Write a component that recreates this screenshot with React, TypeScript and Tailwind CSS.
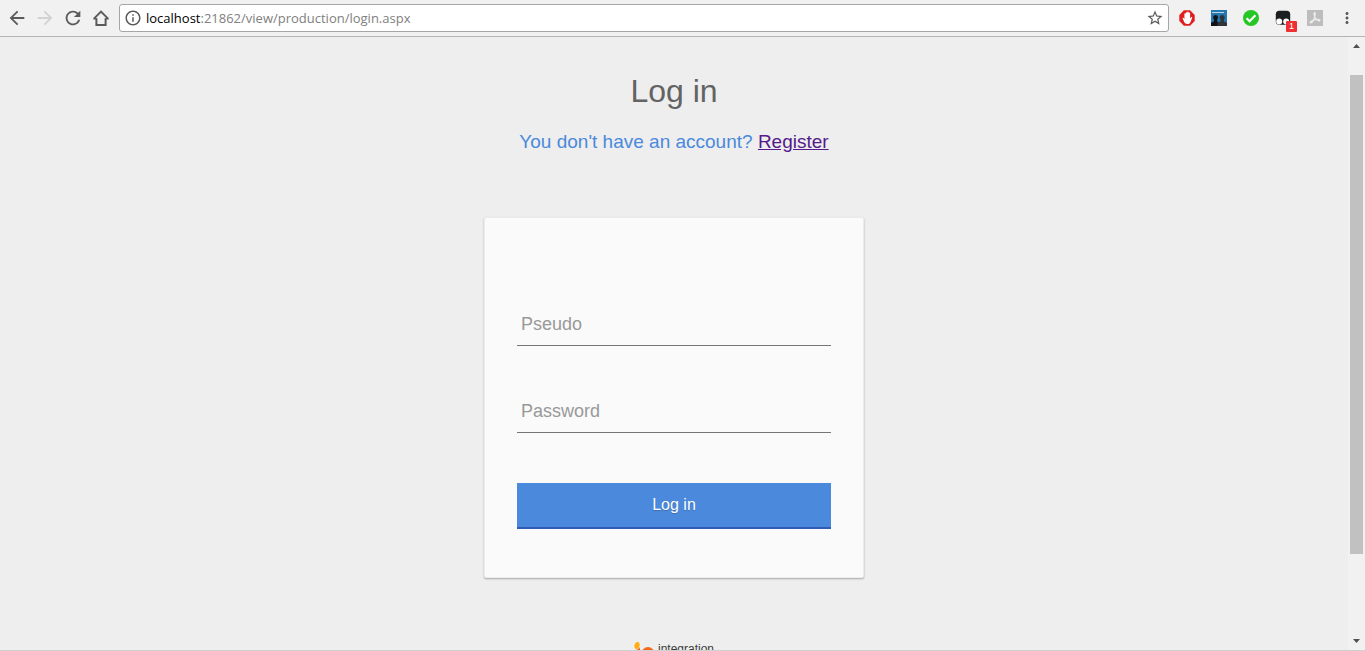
import React, { useState } from "react";
import {
  MdArrowBack,
  MdArrowForward,
  MdInfoOutline,
  MdMoreVert,
  MdRefresh,
  MdStarBorder,
} from "react-icons/md";

type IconButtonProps = {
  label: string;
  disabled?: boolean;
  children: React.ReactNode;
};

function NavButton({ label, disabled, children }: IconButtonProps) {
  return (
    <button
      type="button"
      aria-label={label}
      disabled={disabled}
      className="flex size-5 shrink-0 items-center justify-center text-[#5a5a5a] disabled:text-[#d2d2d2]"
    >
      {children}
    </button>
  );
}

function ExtensionButton({ label, children }: IconButtonProps) {
  return (
    <button
      type="button"
      aria-label={label}
      className="relative flex size-4 shrink-0 items-center justify-center"
    >
      {children}
    </button>
  );
}

function HomeIcon() {
  return (
    <svg viewBox="0 0 16 16" className="size-4" fill="none" stroke="currentColor" strokeWidth="2">
      <path d="M1 8.6 8 1.6l7 7M3.4 8.2V15h9.2V8.2" strokeLinejoin="miter" />
      <path d="M.4 8.7h3.2M12.4 8.7h3.2" strokeWidth="1.4" />
    </svg>
  );
}

function BlockerIcon() {
  return (
    <svg viewBox="0 0 16 16" className="size-4">
      <path d="M4.900.3h6.200L15.700 4.900v6.200L11.100 15.700H4.900L.3 11.100V4.900z" fill="#e01f1f" />
      <path
        d="M4.800 11 3.700 8.800c-.4-.9.6-1.300 1.100-.6l.6.8V4c0-.9 1.200-.9 1.300 0V2.900c0-1 1.400-1 1.500 0v-.6c0-1 1.400-1 1.500 0V3c.1-.9 1.400-.8 1.400.2V8.600l.8-1.200c.6-.8 1.500-.3 1.200.6l-1.700 4.200c-.6 1.200-1.500 1.900-3 1.900-1.900 0-3-1.300-3.600-3.100z"
        fill="#fff"
      />
    </svg>
  );
}

function PeopleIcon() {
  return (
    <svg viewBox="0 0 16 16" className="size-4">
      <path d="M0 0h16v16H0z" fill="#2577ae" />
      <path d="M1 2.500h12" stroke="#b8d8ec" strokeWidth="1" />
      <path d="M0 16v-3.200L3 11.400V9.600C1.600 8 2 5 4.600 5s3 3 1.600 4.600v1.800l2.300 1.400V16z" fill="#101418" />
      <path d="M6.500 16v-3.200l3-1.400V9.600C8.200 8 8.500 5 11.200 5s3 3 1.700 4.600v1.800l3.100 1.400V16z" fill="#303438" />
    </svg>
  );
}

function CheckIcon() {
  return (
    <svg viewBox="0 0 16 16" className="size-4">
      <circle cx="8" cy="8" r="8" fill="#25c625" />
      <path d="m3.600 8.200 3 3 5.800-6" fill="none" stroke="#fff" strokeWidth="2.200" />
    </svg>
  );
}

function MonkeyIcon() {
  return (
    <svg viewBox="0 0 16 16" className="size-4">
      <rect x=".8" y=".8" width="14.400" height="14" rx="3.500" fill="#1c1f21" />
      <circle cx="4.200" cy="11.400" r="3" fill="#fff" />
      <circle cx="11.200" cy="11.400" r="3" fill="#fff" />
    </svg>
  );
}

function PdfIcon() {
  return (
    <svg viewBox="0 0 16 16" className="size-4">
      <path d="M0 0h16v16H0z" fill="#bdbdbd" />
      <path
        d="M7.500 2.500c1.400 0 .6 3.500-.3 5.700-.9 2.300-2.500 5-3.700 4.800-1.300-.3 1-2.500 4-3.200 2.600-.6 5.500-.6 5.500.5 0 1.200-2.800.2-4.300-1.700C7.300 6.700 6.500 2.500 7.500 2.500z"
        fill="none"
        stroke="#ededed"
        strokeWidth="1.200"
      />
    </svg>
  );
}

function BrowserBar() {
  return (
    <header className="flex h-[37px] shrink-0 items-center border-b border-[#b4b4b4] bg-[#f1f1f1] pr-[10px] pl-[7px]">
      <nav aria-label="Browser" className="flex items-center gap-2">
        <NavButton label="Back">
          <MdArrowBack className="size-[22px] shrink-0" />
        </NavButton>
        <NavButton label="Forward" disabled>
          <MdArrowForward className="size-[22px] shrink-0" />
        </NavButton>
        <NavButton label="Reload">
          <MdRefresh className="size-[22px] shrink-0" />
        </NavButton>
        <NavButton label="Home">
          <HomeIcon />
        </NavButton>
      </nav>

      <div className="ml-2 flex h-7 min-w-0 flex-1 items-center rounded-[3px] border border-[#a6a6a6] bg-white px-1">
        <MdInfoOutline className="size-[18px] shrink-0 text-[#5a5a5a]" />
        <a
          href="#login"
          className="ml-1 min-w-0 flex-1 truncate font-['Open_Sans','Noto_Sans',sans-serif] text-[13px] leading-5 text-[#808080]"
        >
          <span className="text-black">localhost</span>:21862/view/production/login.aspx
        </a>
        <button type="button" aria-label="Bookmark this page" className="text-[#5a5a5a]">
          <MdStarBorder className="size-[18px]" />
        </button>
      </div>

      <div className="ml-[10px] flex items-center gap-4">
        <ExtensionButton label="Ad blocker">
          <BlockerIcon />
        </ExtensionButton>
        <ExtensionButton label="People">
          <PeopleIcon />
        </ExtensionButton>
        <ExtensionButton label="Site status">
          <CheckIcon />
        </ExtensionButton>
        <ExtensionButton label="User scripts">
          <MonkeyIcon />
          <span className="absolute top-[11px] left-[11px] flex h-[11px] w-[11px] items-center justify-center rounded-[1px] bg-[#ee3035] font-['Liberation_Sans',sans-serif] text-[9px] leading-none text-white">
            1
          </span>
        </ExtensionButton>
        <ExtensionButton label="PDF">
          <PdfIcon />
        </ExtensionButton>
        <ExtensionButton label="Menu">
          <MdMoreVert className="size-[18px] shrink-0 text-[#5a5a5a]" />
        </ExtensionButton>
      </div>
    </header>
  );
}

type FieldProps = {
  id: string;
  label: string;
  type: string;
  value: string;
  onChange: (value: string) => void;
};

function Field({ id, label, type, value, onChange }: FieldProps) {
  return (
    <div className="relative">
      <input
        id={id}
        type={type}
        placeholder=" "
        value={value}
        onChange={(event) => onChange(event.target.value)}
        className="peer block h-11 w-full border-b border-[#757575] bg-transparent px-1 text-lg leading-6 text-[#333] outline-none"
      />
      <label
        htmlFor={id}
        className="pointer-events-none absolute top-[10px] left-1 text-lg leading-6 text-[#999] peer-[:not(:placeholder-shown)]:hidden"
      >
        {label}
      </label>
    </div>
  );
}

function LoginForm() {
  const [pseudo, setPseudo] = useState("");
  const [password, setPassword] = useState("");

  return (
    <form
      onSubmit={(event) => event.preventDefault()}
      className="mt-[63px] w-full max-w-[380px] rounded-[2px] border border-[#ececec] bg-[#fafafa] px-8 pt-[84px] pb-12 shadow-[0_1px_2px_rgba(0,0,0,0.3)]"
    >
      <div className="flex flex-col gap-[43px]">
        <Field id="pseudo" label="Pseudo" type="text" value={pseudo} onChange={setPseudo} />
        <Field id="password" label="Password" type="password" value={password} onChange={setPassword} />
      </div>
      <button
        type="submit"
        className="mt-[50px] block h-[46px] w-full border-b-2 border-[#2f5bb7] bg-[#4b89dc] text-base leading-6 text-white [text-shadow:0_1px_1px_rgba(0,0,0,0.2)]"
      >
        Log in
      </button>
    </form>
  );
}

function FooterLogo() {
  return (
    <footer className="mt-16 flex w-full justify-center">
      <div className="flex h-8 w-[84px] items-start gap-1">
        <svg viewBox="0 0 22 30" className="h-[30px] w-[22px] shrink-0">
          <ellipse cx="5" cy="3.500" rx="2.500" ry="3.500" fill="#ffae0d" transform="rotate(15 5 3.500)" />
          <path d="M3 8c2 0 4-1 4.500-3l.5 2v20H2z" fill="#ee6a16" />
          <circle cx="16" cy="11.500" r="5" fill="none" stroke="#f26a1b" strokeWidth="3" />
        </svg>
        <span className="font-['Liberation_Sans',sans-serif] text-xs leading-[14px] text-[#3c3c3c]">
          integration
        </span>
      </div>
    </footer>
  );
}

function ScrollBar() {
  return (
    <div aria-hidden="true" className="flex w-[17px] shrink-0 flex-col items-center bg-[#f1f1f1] py-[7px]">
      <svg viewBox="0 0 7 4" className="h-1 w-[7px] shrink-0" fill="#505050">
        <path d="M0 4 3.500 0 7 4z" />
      </svg>
      <div className="flex w-[13px] flex-1 flex-col pt-[27px] pb-[85px]">
        <div className="flex-1 bg-[#c1c1c1]" />
      </div>
      <svg viewBox="0 0 7 4" className="h-1 w-[7px] shrink-0" fill="#505050">
        <path d="M0 0h7L3.500 4z" />
      </svg>
    </div>
  );
}

export default function App() {
  return (
    <div className="flex h-screen flex-col border-b border-[#cfcfcf] bg-[#eee] font-['Liberation_Sans',Arial,sans-serif]">
      <BrowserBar />
      <div className="flex min-h-0 flex-1">
        <main className="flex min-w-0 flex-1 flex-col items-center overflow-x-hidden overflow-y-auto pt-9 [scrollbar-width:none]">
          <h1 className="text-[32px] leading-9 text-[#636363]">Log in</h1>
          <p className="mt-5 text-[19px] leading-[25px] text-[#4a89dc]">
            You don't have an account?{" "}
            <a href="#register" className="text-[#551a8b] underline">
              Register
            </a>
          </p>
          <LoginForm />
          <FooterLogo />
        </main>
        <ScrollBar />
      </div>
    </div>
  );
}
